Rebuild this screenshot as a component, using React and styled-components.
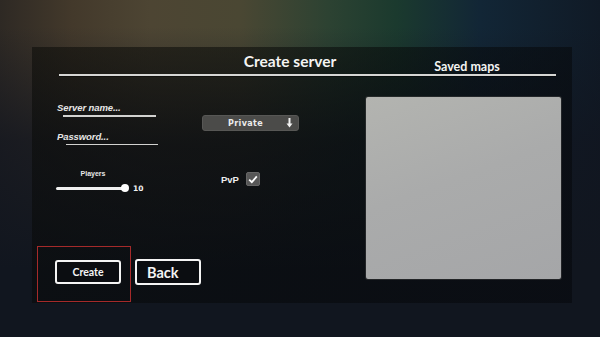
import React from 'react';
import styled, { createGlobalStyle } from 'styled-components';

const GlobalStyle = createGlobalStyle`
    html, body {
        margin: 0;
        padding: 0;
        width: 600px;
        height: 337px;
        overflow: hidden;
        background-color: #11161f;
        background-image:
            linear-gradient(180deg, rgba(17,21,31,0) 0%, rgba(17,21,31,0) 8%, rgba(17,21,31,0.75) 42%, #11161f 80%),
            linear-gradient(90deg, #2e2924 0%, #43392b 12%, #4d4533 25%, #4a4733 40%, #2c4232 55%, #1b3a2e 66%, #122636 80%, #101a26 100%);
        font-family: "Lato", "Liberation Sans", sans-serif;
        color: #f2f2f2;
    }
    * { box-sizing: border-box; }
`;

const Styled = {
    Screen: styled.div`
        width: 600px;
        height: 337px;
        padding: 47px 0 0 32px;
    `,
    Panel: styled.div`
        width: 540px;
        height: 256px;
        display: flex;
        flex-direction: column;
        background: linear-gradient(135deg, rgba(10,11,8,0.55) 0%, rgba(6,8,9,0.55) 55%, rgba(2,3,6,0.45) 100%);
    `,
    Header: styled.div`
        flex-shrink: 0;
        margin-left: 27px;
        width: 497px;
        height: 29px;
        display: flex;
        align-items: flex-start;
        border-bottom: 2px solid #d6d6d4;
        box-shadow: 0 1px 0 rgba(0,0,0,0.4);
    `,
    Title: styled.div`
        margin-left: ${props => props.left}px;
        margin-top: ${props => props.top}px;
        width: ${props => props.width}px;
        text-align: center;
        font-size: ${props => props.ft}px;
        line-height: ${props => props.lh}px;
        font-weight: 700;
        color: #f4f4f2;
    `,
    Content: styled.div`
        flex: 1;
        display: flex;
    `,
    FormArea: styled.div`
        width: 334px;
        display: flex;
        flex-direction: column;
    `,
    Fields: styled.div`
        display: flex;
        padding-left: 25px;
    `,
    Column: styled.div`
        width: ${props => props.width}px;
        display: flex;
        flex-direction: column;
        padding-top: ${props => props.top}px;
    `,
    TextField: styled.div`
        display: flex;
        flex-direction: column;
        margin-top: ${props => props.gap || 0}px;
    `,
    Placeholder: styled.div`
        font-family: "Liberation Sans", sans-serif;
        font-style: italic;
        font-weight: 700;
        font-size: 9.5px;
        line-height: 12px;
        color: #e6e6e6;
        letter-spacing: -0.1px;
    `,
    Underline: styled.div`
        margin-top: 1px;
        margin-left: ${props => props.left}px;
        width: ${props => props.width}px;
        height: 1.5px;
        background: #d2d2d0;
    `,
    SliderLabel: styled.div`
        margin-top: 24px;
        width: 72px;
        text-align: center;
        font-family: "Liberation Sans", sans-serif;
        font-weight: 700;
        font-size: 7px;
        line-height: 9px;
        color: #e8e8e8;
    `,
    SliderRow: styled.div`
        margin-top: 5px;
        margin-left: -1px;
        height: 10px;
        display: flex;
        align-items: center;
    `,
    Track: styled.div`
        position: relative;
        width: 69px;
        height: 3px;
        border-radius: 2px;
        background: #f0f0f0;
    `,
    Knob: styled.div`
        position: absolute;
        right: -4px;
        top: -2.5px;
        width: 8px;
        height: 8px;
        border-radius: 50%;
        background: #ffffff;
    `,
    SliderValue: styled.div`
        margin-left: 8px;
        font-family: "DejaVu Sans", sans-serif;
        font-weight: 700;
        font-size: 7.5px;
        color: #f0f0f0;
    `,
    Dropdown: styled.div`
        margin-top: 39px;
        width: 97px;
        height: 16px;
        border-radius: 3px;
        background: #4b4b49;
        border: 1px solid #575755;
        display: flex;
        align-items: center;
    `,
    DropdownText: styled.div`
        flex: 1;
        text-align: center;
        font-family: "DejaVu Sans", sans-serif;
        font-weight: 700;
        font-size: 8px;
        letter-spacing: 0.4px;
        color: #ececec;
        padding-left: 2px;
    `,
    DropdownArrow: styled.svg`
        width: 7px;
        height: 10px;
        margin-right: 5px;
    `,
    ToggleRow: styled.div`
        margin-top: 41px;
        padding-left: 19px;
        display: flex;
        align-items: center;
        height: 14px;
    `,
    ToggleLabel: styled.div`
        font-family: "Liberation Sans", sans-serif;
        font-weight: 700;
        font-size: 9.5px;
        color: #eeeeee;
        margin-right: 7px;
        margin-top: 1px;
    `,
    Checkbox: styled.div`
        width: 14px;
        height: 14px;
        border-radius: 2px;
        background: #575757;
        border: 1px solid #666;
        display: flex;
        align-items: center;
        justify-content: center;
    `,
    Buttons: styled.div`
        margin-top: auto;
        margin-bottom: 1px;
        padding-left: 5px;
        display: flex;
        align-items: flex-start;
    `,
    FocusRing: styled.div`
        width: 94px;
        height: 56px;
        border: 1px solid #a52a2a;
        padding: 13px 0 0 17px;
    `,
    Btn: styled.button`
        width: 66px;
        height: ${props => props.h}px;
        margin: ${props => props.mt || 0}px 0 0 ${props => props.ml || 0}px;
        padding: 0 0 0 ${props => props.pl || 0}px;
        background: #0b0d11;
        border: 2px solid #f4f4f4;
        border-radius: 3px;
        color: #f4f4f4;
        font-family: "Lato", "Liberation Sans", sans-serif;
        font-weight: 700;
        font-size: ${props => props.ft}px;
        text-align: ${props => props.align || 'center'};
        cursor: pointer;
        &:focus { outline: none; }
    `,
    MapBox: styled.div`
        margin-top: 21px;
        width: 195px;
        height: 182px;
        border-radius: 2px;
        background: linear-gradient(160deg, #b3b4b0 0%, #aaabab 45%, #a5a6a8 100%);
        box-shadow: 0 0 0 1px rgba(60,60,60,0.5);
    `,
};

function App() {
    return (
        <>
            <GlobalStyle />
            <Styled.Screen>
                <Styled.Panel>
                    <Styled.Header>
                        <Styled.Title left={151} top={5} width={160} ft={15.5} lh={18}>Create server</Styled.Title>
                        <Styled.Title left={37} top={12} width={120} ft={12.5} lh={15}>Saved maps</Styled.Title>
                    </Styled.Header>
                    <Styled.Content>
                        <Styled.FormArea>
                            <Styled.Fields>
                                <Styled.Column width={145} top={26}>
                                    <Styled.TextField>
                                        <Styled.Placeholder>Server name...</Styled.Placeholder>
                                        <Styled.Underline left={6} width={93} />
                                    </Styled.TextField>
                                    <Styled.TextField gap={14}>
                                        <Styled.Placeholder>Password...</Styled.Placeholder>
                                        <Styled.Underline left={9} width={92} />
                                    </Styled.TextField>
                                    <Styled.SliderLabel>Players</Styled.SliderLabel>
                                    <Styled.SliderRow>
                                        <Styled.Track>
                                            <Styled.Knob />
                                        </Styled.Track>
                                        <Styled.SliderValue>10</Styled.SliderValue>
                                    </Styled.SliderRow>
                                </Styled.Column>
                                <Styled.Column width={110} top={0}>
                                    <Styled.Dropdown>
                                        <Styled.DropdownText>Private</Styled.DropdownText>
                                        <Styled.DropdownArrow viewBox="0 0 7 10">
                                            <path d="M2.5 0 H4.5 V5.5 H6.5 L3.5 9.5 L0.5 5.5 H2.5 Z" fill="#f2f2f2" />
                                        </Styled.DropdownArrow>
                                    </Styled.Dropdown>
                                    <Styled.ToggleRow>
                                        <Styled.ToggleLabel>PvP</Styled.ToggleLabel>
                                        <Styled.Checkbox>
                                            <svg width="10" height="9" viewBox="0 0 10 9">
                                                <path d="M1.2 4.6 L3.8 7.2 L8.8 1.4" fill="none" stroke="#ffffff" strokeWidth="1.8" />
                                            </svg>
                                        </Styled.Checkbox>
                                    </Styled.ToggleRow>
                                </Styled.Column>
                            </Styled.Fields>
                            <Styled.Buttons>
                                <Styled.FocusRing>
                                    <Styled.Btn h={24} ft={10.5}>Create</Styled.Btn>
                                </Styled.FocusRing>
                                <Styled.Btn h={26} mt={13} ml={4} pl={10} ft={14.5} align="left">Back</Styled.Btn>
                            </Styled.Buttons>
                        </Styled.FormArea>
                        <Styled.MapBox />
                    </Styled.Content>
                </Styled.Panel>
            </Styled.Screen>
        </>
    );
}

export default App;
